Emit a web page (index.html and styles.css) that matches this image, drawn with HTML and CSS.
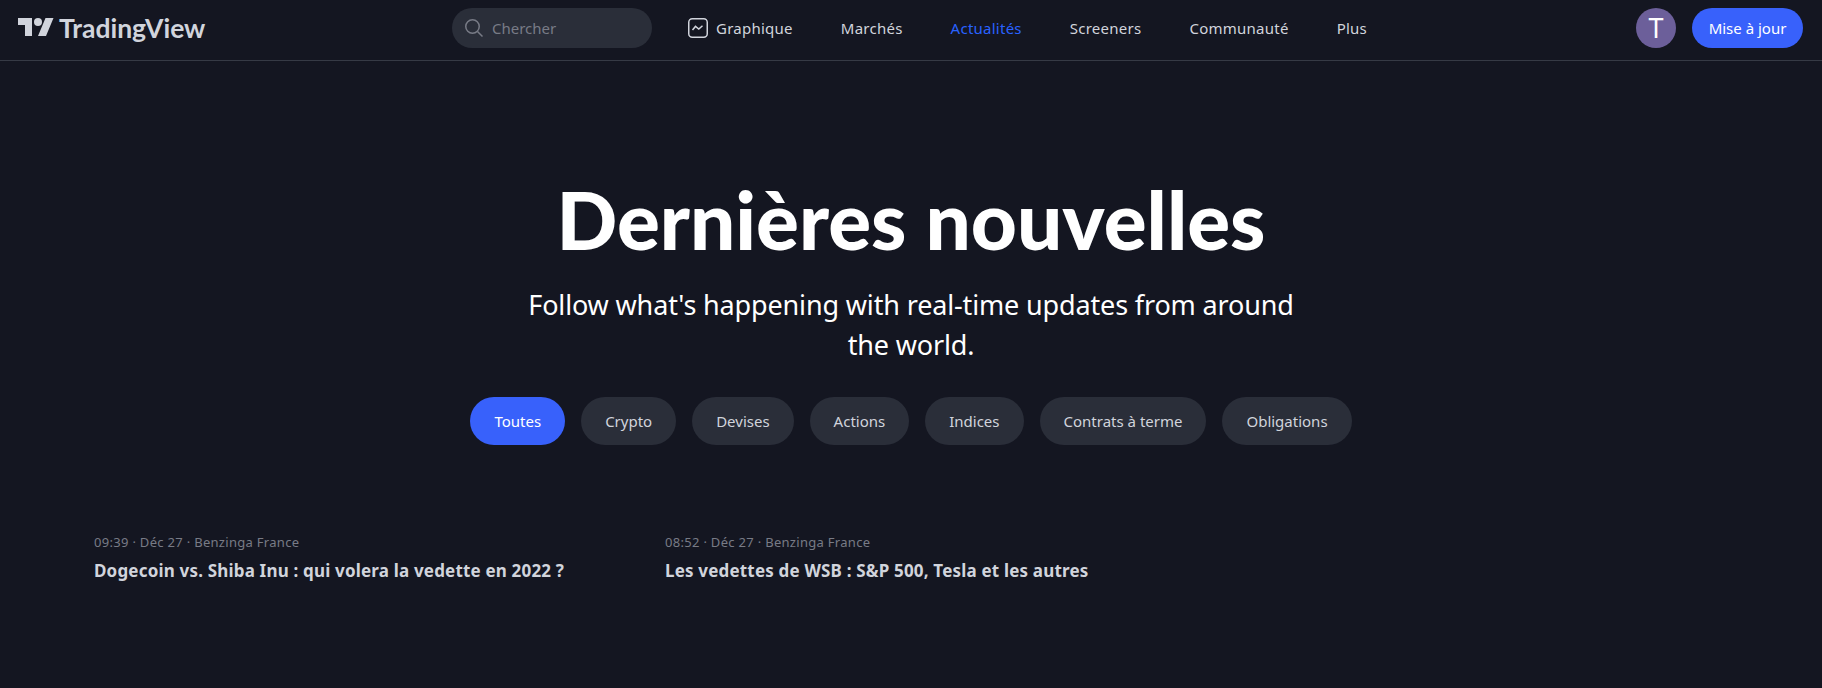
FILE: index.html
```html
<!DOCTYPE html>
<html lang="fr">
<head>
  <meta charset="UTF-8">
  <title>Dernières nouvelles - TradingView</title>
  <link rel="stylesheet" href="styles.css">
</head>
<body>
  <header class="topbar">
    <a class="logo" href="#">
      <svg class="logo-mark" viewBox="0 0 36 28" width="36" height="28">
        <path d="M14 22H7V11H0V4h14v18zM28 22h-8l7.500-18h8L28 22z"/>
        <circle cx="20" cy="8" r="4"/>
      </svg>
      <span class="logo-text">TradingView</span>
    </a>

    <div class="search">
      <svg class="search-icon" viewBox="0 0 18 18" width="18" height="18">
        <circle cx="7.500" cy="7.500" r="6.750"/>
        <path d="M12.500 12.500l5 5"/>
      </svg>
      <span class="search-text">Chercher</span>
    </div>

    <nav class="nav">
      <a class="nav-item nav-chart" href="#">
        <svg class="chart-icon" viewBox="0 0 20 20" width="20" height="20">
          <rect x="0.750" y="0.750" width="18.500" height="18.500" rx="3.500"/>
          <path d="M4.500 12l3-3.600 3.300 2.600 3.700-3.300"/>
        </svg>
        Graphique
      </a>
      <a class="nav-item" href="#">Marchés</a>
      <a class="nav-item active" href="#">Actualités</a>
      <a class="nav-item" href="#">Screeners</a>
      <a class="nav-item" href="#">Communauté</a>
      <a class="nav-item" href="#">Plus</a>
    </nav>

    <div class="account">
      <div class="avatar">T</div>
      <a class="upgrade" href="#">Mise à jour</a>
    </div>
  </header>

  <main>
    <section class="hero">
      <h1>Dernières nouvelles</h1>
      <p>Follow what's happening with real-time updates from around the world.</p>
      <div class="pills">
        <a class="pill active" href="#">Toutes</a>
        <a class="pill" href="#">Crypto</a>
        <a class="pill" href="#">Devises</a>
        <a class="pill" href="#">Actions</a>
        <a class="pill" href="#">Indices</a>
        <a class="pill" href="#">Contrats à terme</a>
        <a class="pill" href="#">Obligations</a>
      </div>
    </section>

    <section class="news-grid">
      <article class="news-card">
        <div class="news-meta">09:39 · Déc 27 · Benzinga France</div>
        <h3>Dogecoin vs. Shiba Inu : qui volera la vedette en 2022 ?</h3>
      </article>
      <article class="news-card">
        <div class="news-meta">08:52 · Déc 27 · Benzinga France</div>
        <h3>Les vedettes de WSB : S&amp;P 500, Tesla et les autres</h3>
      </article>
    </section>
  </main>
</body>
</html>
```

FILE: styles.css
```css
* {
  box-sizing: border-box;
}
html, body {
  height: 100%;
}
body {
  margin: 0;
  overflow: hidden;
  background-color: #141621;
  color: #d1d4dc;
  font-family: 'Noto Sans', sans-serif;
}
a {
  color: inherit;
  text-decoration: none;
}

/* top bar */
.topbar {
  display: flex;
  align-items: center;
  height: 61px;
  padding: 0 19px 5px 18px;
  border-bottom: 1px solid #363a45;
}
.logo {
  display: flex;
  align-items: center;
  width: 434px;
  color: #d1d4dc;
}
.logo-mark {
  fill: currentColor;
}
.logo-text {
  margin-left: 5px;
  font-family: 'Lato', sans-serif;
  font-size: 26.5px;
  font-weight: 700;
}
.search {
  display: flex;
  align-items: center;
  width: 200px;
  height: 40px;
  padding-left: 13px;
  border-radius: 20px;
  background-color: #2a2e39;
}
.search-icon {
  fill: none;
  stroke: #787b86;
  stroke-width: 1.5;
}
.search-text {
  margin-left: 9px;
  color: #787b86;
  font-size: 15px;
}
.nav {
  display: flex;
  align-items: center;
  margin-left: 12px;
  font-size: 15px;
  letter-spacing: 0.25px;
}
.nav-item {
  display: flex;
  align-items: center;
  padding: 0 24px;
  white-space: nowrap;
}
.nav-item.active {
  color: #2962ff;
}
.nav-chart {
  gap: 8px;
}
.chart-icon {
  fill: none;
  stroke: #d1d4dc;
  stroke-width: 1.5;
}
.account {
  display: flex;
  align-items: center;
  gap: 16px;
  margin-left: auto;
}
.avatar {
  display: flex;
  align-items: center;
  justify-content: center;
  width: 40px;
  height: 40px;
  border-radius: 50%;
  background-color: #6c5f9a;
  color: #fff;
  font-size: 27px;
}
.upgrade {
  display: flex;
  align-items: center;
  justify-content: center;
  width: 111px;
  height: 40px;
  border-radius: 20px;
  background-color: #3861fb;
  color: #fff;
  font-size: 15px;
}

/* hero */
.hero {
  padding-top: 108px;
  text-align: center;
}
.hero h1 {
  margin: 0;
  color: #fff;
  font-family: 'Lato', sans-serif;
  font-size: 80px;
  font-weight: 900;
  line-height: 100px;
}
.hero p {
  width: 780px;
  margin: 16px auto 0;
  color: #fff;
  font-size: 27px;
  letter-spacing: -0.15px;
  line-height: 40px;
}
.pills {
  display: flex;
  justify-content: center;
  gap: 16px;
  margin-top: 32px;
}
.pill {
  display: flex;
  align-items: center;
  height: 48px;
  padding: 0 24px 1px;
  border-radius: 24px;
  background-color: #2a2e39;
  font-size: 15px;
}
.pill.active {
  background-color: #3861fb;
  color: #fff;
}

/* news */
.news-grid {
  display: grid;
  grid-template-columns: repeat(3, 547px);
  gap: 24px;
  margin: 87px 0 0 94px;
}
.news-meta {
  color: #787b86;
  font-size: 13px;
  letter-spacing: 0.3px;
  line-height: 20px;
}
.news-card h3 {
  margin: 8px 0 0;
  color: #d1d4dc;
  font-size: 17px;
  font-weight: 700;
  letter-spacing: 0.18px;
  line-height: 22px;
}
```
